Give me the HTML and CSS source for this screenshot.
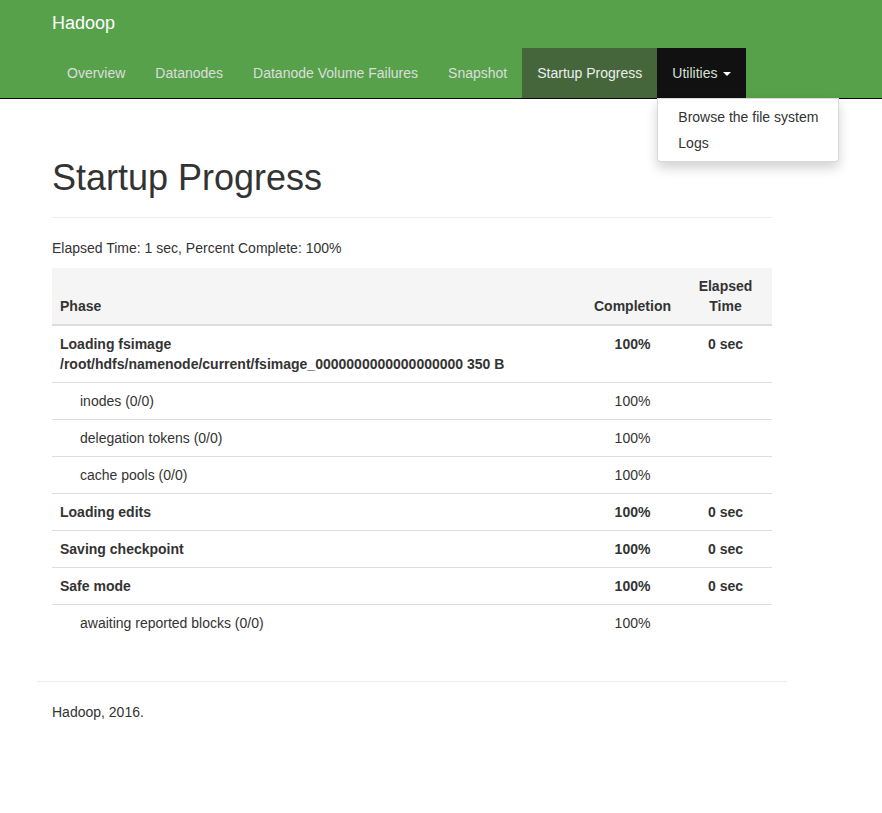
FILE: index.html
```
<!DOCTYPE html>
<html>
<head>
<meta charset="utf-8">
<title>Startup Progress</title>
<link rel="stylesheet" href="styles.css">
</head>
<body>
<header class="navbar">
  <div class="container">
    <div class="brand">Hadoop</div>
    <ul class="nav">
      <li><a href="#">Overview</a></li>
      <li><a href="#">Datanodes</a></li>
      <li><a href="#">Datanode Volume Failures</a></li>
      <li><a href="#">Snapshot</a></li>
      <li class="active"><a href="#">Startup Progress</a></li>
      <li class="open">
        <a href="#">Utilities <span class="caret"></span></a>
        <ul class="dropdown-menu">
          <li><a href="#">Browse the file system</a></li>
          <li><a href="#">Logs</a></li>
        </ul>
      </li>
    </ul>
  </div>
</header>
<main class="container">
  <div class="page-header">
    <h1>Startup Progress</h1>
  </div>
  <p>Elapsed Time: 1 sec, Percent Complete: 100%</p>
  <table class="table">
    <thead>
      <tr>
        <th class="col-phase">Phase</th>
        <th class="col-num">Completion</th>
        <th class="col-num">Elapsed Time</th>
      </tr>
    </thead>
    <tbody>
      <tr class="phase">
        <td>Loading fsimage<br>/root/hdfs/namenode/current/fsimage_0000000000000000000 350 B</td>
        <td class="num">100%</td>
        <td class="num">0 sec</td>
      </tr>
      <tr class="step">
        <td>inodes (0/0)</td>
        <td class="num">100%</td>
        <td class="num"></td>
      </tr>
      <tr class="step">
        <td>delegation tokens (0/0)</td>
        <td class="num">100%</td>
        <td class="num"></td>
      </tr>
      <tr class="step">
        <td>cache pools (0/0)</td>
        <td class="num">100%</td>
        <td class="num"></td>
      </tr>
      <tr class="phase">
        <td>Loading edits</td>
        <td class="num">100%</td>
        <td class="num">0 sec</td>
      </tr>
      <tr class="phase">
        <td>Saving checkpoint</td>
        <td class="num">100%</td>
        <td class="num">0 sec</td>
      </tr>
      <tr class="phase">
        <td>Safe mode</td>
        <td class="num">100%</td>
        <td class="num">0 sec</td>
      </tr>
      <tr class="step">
        <td>awaiting reported blocks (0/0)</td>
        <td class="num">100%</td>
        <td class="num"></td>
      </tr>
    </tbody>
  </table>
  <footer class="footer">
    <hr>
    <p>Hadoop, 2016.</p>
  </footer>
</main>
</body>
</html>
```

FILE: styles.css
```
* {
  box-sizing: border-box;
}

html, body {
  margin: 0;
  padding: 0;
}

body {
  font-family: "Liberation Sans", Arial, Helvetica, sans-serif;
  font-size: 14px;
  line-height: 1.42857143;
  color: #333;
  background: #fff;
}

a {
  text-decoration: none;
}

.container {
  width: 750px;
  margin-left: 37px;
  padding: 0 15px;
}

/* Navbar */
.navbar {
  background-color: #57a14b;
  border-bottom: 1px solid #080808;
}

.brand {
  height: 48px;
  padding: 13px 0 15px;
  font-size: 18px;
  line-height: 20px;
  color: #fff;
}

.nav {
  display: flex;
  list-style: none;
  margin: 0;
  padding: 0;
}

.nav > li {
  position: relative;
}

.nav > li > a {
  display: block;
  padding: 15px;
  line-height: 20px;
  color: #ddd;
}

.nav > li.active > a {
  background-color: #45663a;
  color: #eee;
}

.nav > li.open > a {
  background-color: #111;
  color: #d6e0d2;
}

.caret {
  display: inline-block;
  width: 0;
  height: 0;
  margin-left: 2px;
  vertical-align: middle;
  border-top: 4px solid #fff;
  border-left: 4px solid transparent;
  border-right: 4px solid transparent;
}

.dropdown-menu {
  position: absolute;
  top: 100%;
  left: 0;
  z-index: 1000;
  min-width: 160px;
  margin: 0;
  padding: 5px 0;
  list-style: none;
  background-color: #fff;
  border: 1px solid rgba(0, 0, 0, 0.15);
  border-radius: 0 0 4px 4px;
  box-shadow: 0 6px 12px rgba(0, 0, 0, 0.175);
  white-space: nowrap;
}

.dropdown-menu a {
  display: block;
  padding: 3px 20px;
  line-height: 20px;
  color: #333;
}

/* Page */
.page-header {
  margin: 59px 0 20px;
  padding-bottom: 9px;
  border-bottom: 1px solid #eee;
}

h1 {
  margin: 0 0 10px;
  font-size: 36px;
  font-weight: 500;
  line-height: 1.1;
  color: #333;
}

p {
  margin: 0 0 10px;
}

/* Table */
.table {
  width: 100%;
  border-collapse: collapse;
  border-spacing: 0;
  table-layout: fixed;
  margin-bottom: 20px;
}

.table th,
.table td {
  padding: 8px;
  line-height: 1.42857143;
  vertical-align: top;
  border-top: 1px solid #ddd;
  text-align: left;
}

.table thead {
  background-color: #f5f5f5;
}

.table thead th {
  vertical-align: bottom;
  border-top: 0;
  border-bottom: 2px solid #ddd;
  font-weight: bold;
}

.table .col-num {
  width: 93px;
  text-align: center;
}

.table td.num {
  text-align: center;
}

.table tr.phase td {
  font-weight: bold;
}

.table tr.step td:first-child {
  padding-left: 28px;
}

/* Footer */
.footer {
  display: flow-root;
}

.footer hr {
  margin: 20px -15px;
  border: 0;
  border-top: 1px solid #eee;
  height: 0;
}
```
